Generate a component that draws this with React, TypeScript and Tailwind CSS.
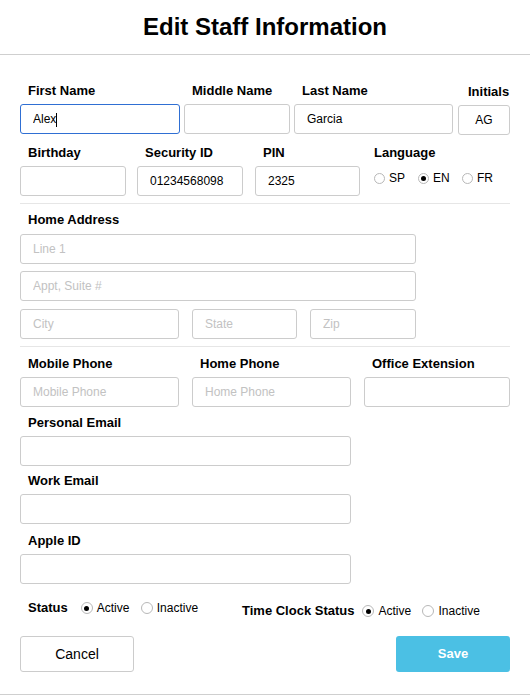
export default function App() {
  return (
    <div className="relative flex h-[695px] w-[530px] flex-col border-b border-[#cfcfcf] bg-white font-['Liberation_Sans',Arial,sans-serif] text-black">
      <header className="flex h-[55px] shrink-0 items-center justify-center border-b border-[#cfcfcf]">
        <h1 className="text-[24px] font-bold leading-none">Edit Staff Information</h1>
      </header>

      <form className="flex flex-col px-5 pt-[28px]">
        {/* names */}
        <div className="flex">
          <Field label="First Name" className="w-[160px]">
            <div className="relative">
              <Input value="Alex" focused />
              <span className="absolute left-[36px] top-[9px] h-[14px] w-px bg-black" />
            </div>
          </Field>
          <Field label="Middle Name" className="ml-[4px] w-[106px]">
            <Input />
          </Field>
          <Field label="Last Name" className="ml-[4px] w-[159px]">
            <Input value="Garcia" />
          </Field>
          <Field label="Initials" className="ml-[5px] w-[52px]" labelClass="pl-[10px] pt-px">
            <Input value="AG" center />
          </Field>
        </div>

        <div className="mt-[10px] flex">
          <Field label="Birthday" className="w-[106px]">
            <Input />
          </Field>
          <Field label="Security ID" className="ml-[11px] w-[106px]">
            <Input value="01234568098" />
          </Field>
          <Field label="PIN" className="ml-[12px] w-[105px]">
            <Input value="2325" />
          </Field>
          <div className="ml-[14px] flex flex-col">
            <div className="text-[13px] font-bold leading-4">Language</div>
            <div className="mt-[10px] flex text-[12px] leading-[14px]">
              <Radio label="SP" className="w-[44px]" small />
              <Radio label="EN" className="w-[44px]" checked small />
              <Radio label="FR" small />
            </div>
          </div>
        </div>

        <div className="mt-[7px] h-px w-[490px] bg-[#e6e6e6]" />

        {/* address */}
        <div className="mt-[8px] pl-2 text-[13px] font-bold leading-4">Home Address</div>
        <div className="mt-[6px] w-[396px]">
          <Input placeholder="Line 1" />
        </div>
        <div className="mt-[7px] w-[396px]">
          <Input placeholder="Appt, Suite #" />
        </div>
        <div className="mt-[8px] flex w-[396px]">
          <div className="w-[159px]">
            <Input placeholder="City" />
          </div>
          <div className="ml-[13px] w-[105px]">
            <Input placeholder="State" />
          </div>
          <div className="ml-[13px] w-[106px]">
            <Input placeholder="Zip" />
          </div>
        </div>

        <div className="mt-[7px] h-px w-[490px] bg-[#e6e6e6]" />

        {/* contact */}
        <div className="mt-[9px] flex">
          <Field label="Mobile Phone" className="w-[159px]">
            <Input placeholder="Mobile Phone" />
          </Field>
          <Field label="Home Phone" className="ml-[13px] w-[159px]">
            <Input placeholder="Home Phone" />
          </Field>
          <Field label="Office Extension" className="ml-[13px] w-[146px]">
            <Input />
          </Field>
        </div>

        <Field label="Personal Email" className="mt-[8px] w-[331px]">
          <Input />
        </Field>
        <Field label="Work Email" className="mt-[7px] w-[331px]">
          <Input />
        </Field>
        <Field label="Apple ID" className="mt-[9px] w-[331px]">
          <Input />
        </Field>

        {/* status */}
        <div className="mt-[16px] flex text-[12px]">
          <div className="flex w-[222px] items-center self-start">
            <span className="pl-2 text-[13px] font-bold leading-4">Status</span>
            <div className="ml-[13px] flex">
              <Radio label="Active" className="w-[60px]" checked />
              <Radio label="Inactive" />
            </div>
          </div>
          <div className="mt-[3px] flex items-center">
            <span className="text-[13px] font-bold leading-4">Time Clock Status</span>
            <div className="ml-[8px] flex">
              <Radio label="Active" className="w-[60px]" checked />
              <Radio label="Inactive" />
            </div>
          </div>
        </div>

        <div className="mt-[17px] flex justify-between">
          <button type="button" className="h-[36px] w-[114px] rounded-[3px] border border-[#cccccc] bg-white text-[14px]">
            Cancel
          </button>
          <button type="button" className="h-[36px] w-[114px] rounded-[3px] bg-[#4bc0e4] text-[13px] font-bold text-white">
            Save
          </button>
        </div>
      </form>
    </div>
  );
}

function Field({
  label,
  className = "",
  labelClass = "pl-2",
  children,
}: {
  label: string;
  className?: string;
  labelClass?: string;
  children: React.ReactNode;
}) {
  return (
    <div className={"flex flex-col " + className}>
      <div className={"mb-[5px] whitespace-nowrap text-[13px] font-bold leading-4 " + labelClass}>{label}</div>
      {children}
    </div>
  );
}

function Input({
  value,
  placeholder,
  focused,
  center,
}: {
  value?: string;
  placeholder?: string;
  focused?: boolean;
  center?: boolean;
}) {
  return (
    <input
      readOnly
      value={value ?? ""}
      placeholder={placeholder}
      className={
        "block h-[30px] w-full rounded-[3px] border bg-white px-3 text-[12px] text-black outline-none placeholder:text-[#c2c2c2] " +
        (focused ? "border-[#2f6fd3] " : "border-[#cccccc] ") +
        (center ? "text-center" : "")
      }
    />
  );
}

function Radio({
  label,
  checked,
  small,
  className = "",
}: {
  label: string;
  checked?: boolean;
  small?: boolean;
  className?: string;
}) {
  return (
    <label className={"flex items-center leading-[14px] " + className}>
      <span
        className={
          "flex items-center justify-center rounded-full border border-[#b8b8b8] bg-white " +
          (small ? "mr-[4px] h-[11px] w-[11px]" : "mr-[4px] h-[12px] w-[12px]")
        }
      >
        {checked && <span className="h-[5px] w-[5px] rounded-full bg-black" />}
      </span>
      <span className="text-[12px]">{label}</span>
    </label>
  );
}
